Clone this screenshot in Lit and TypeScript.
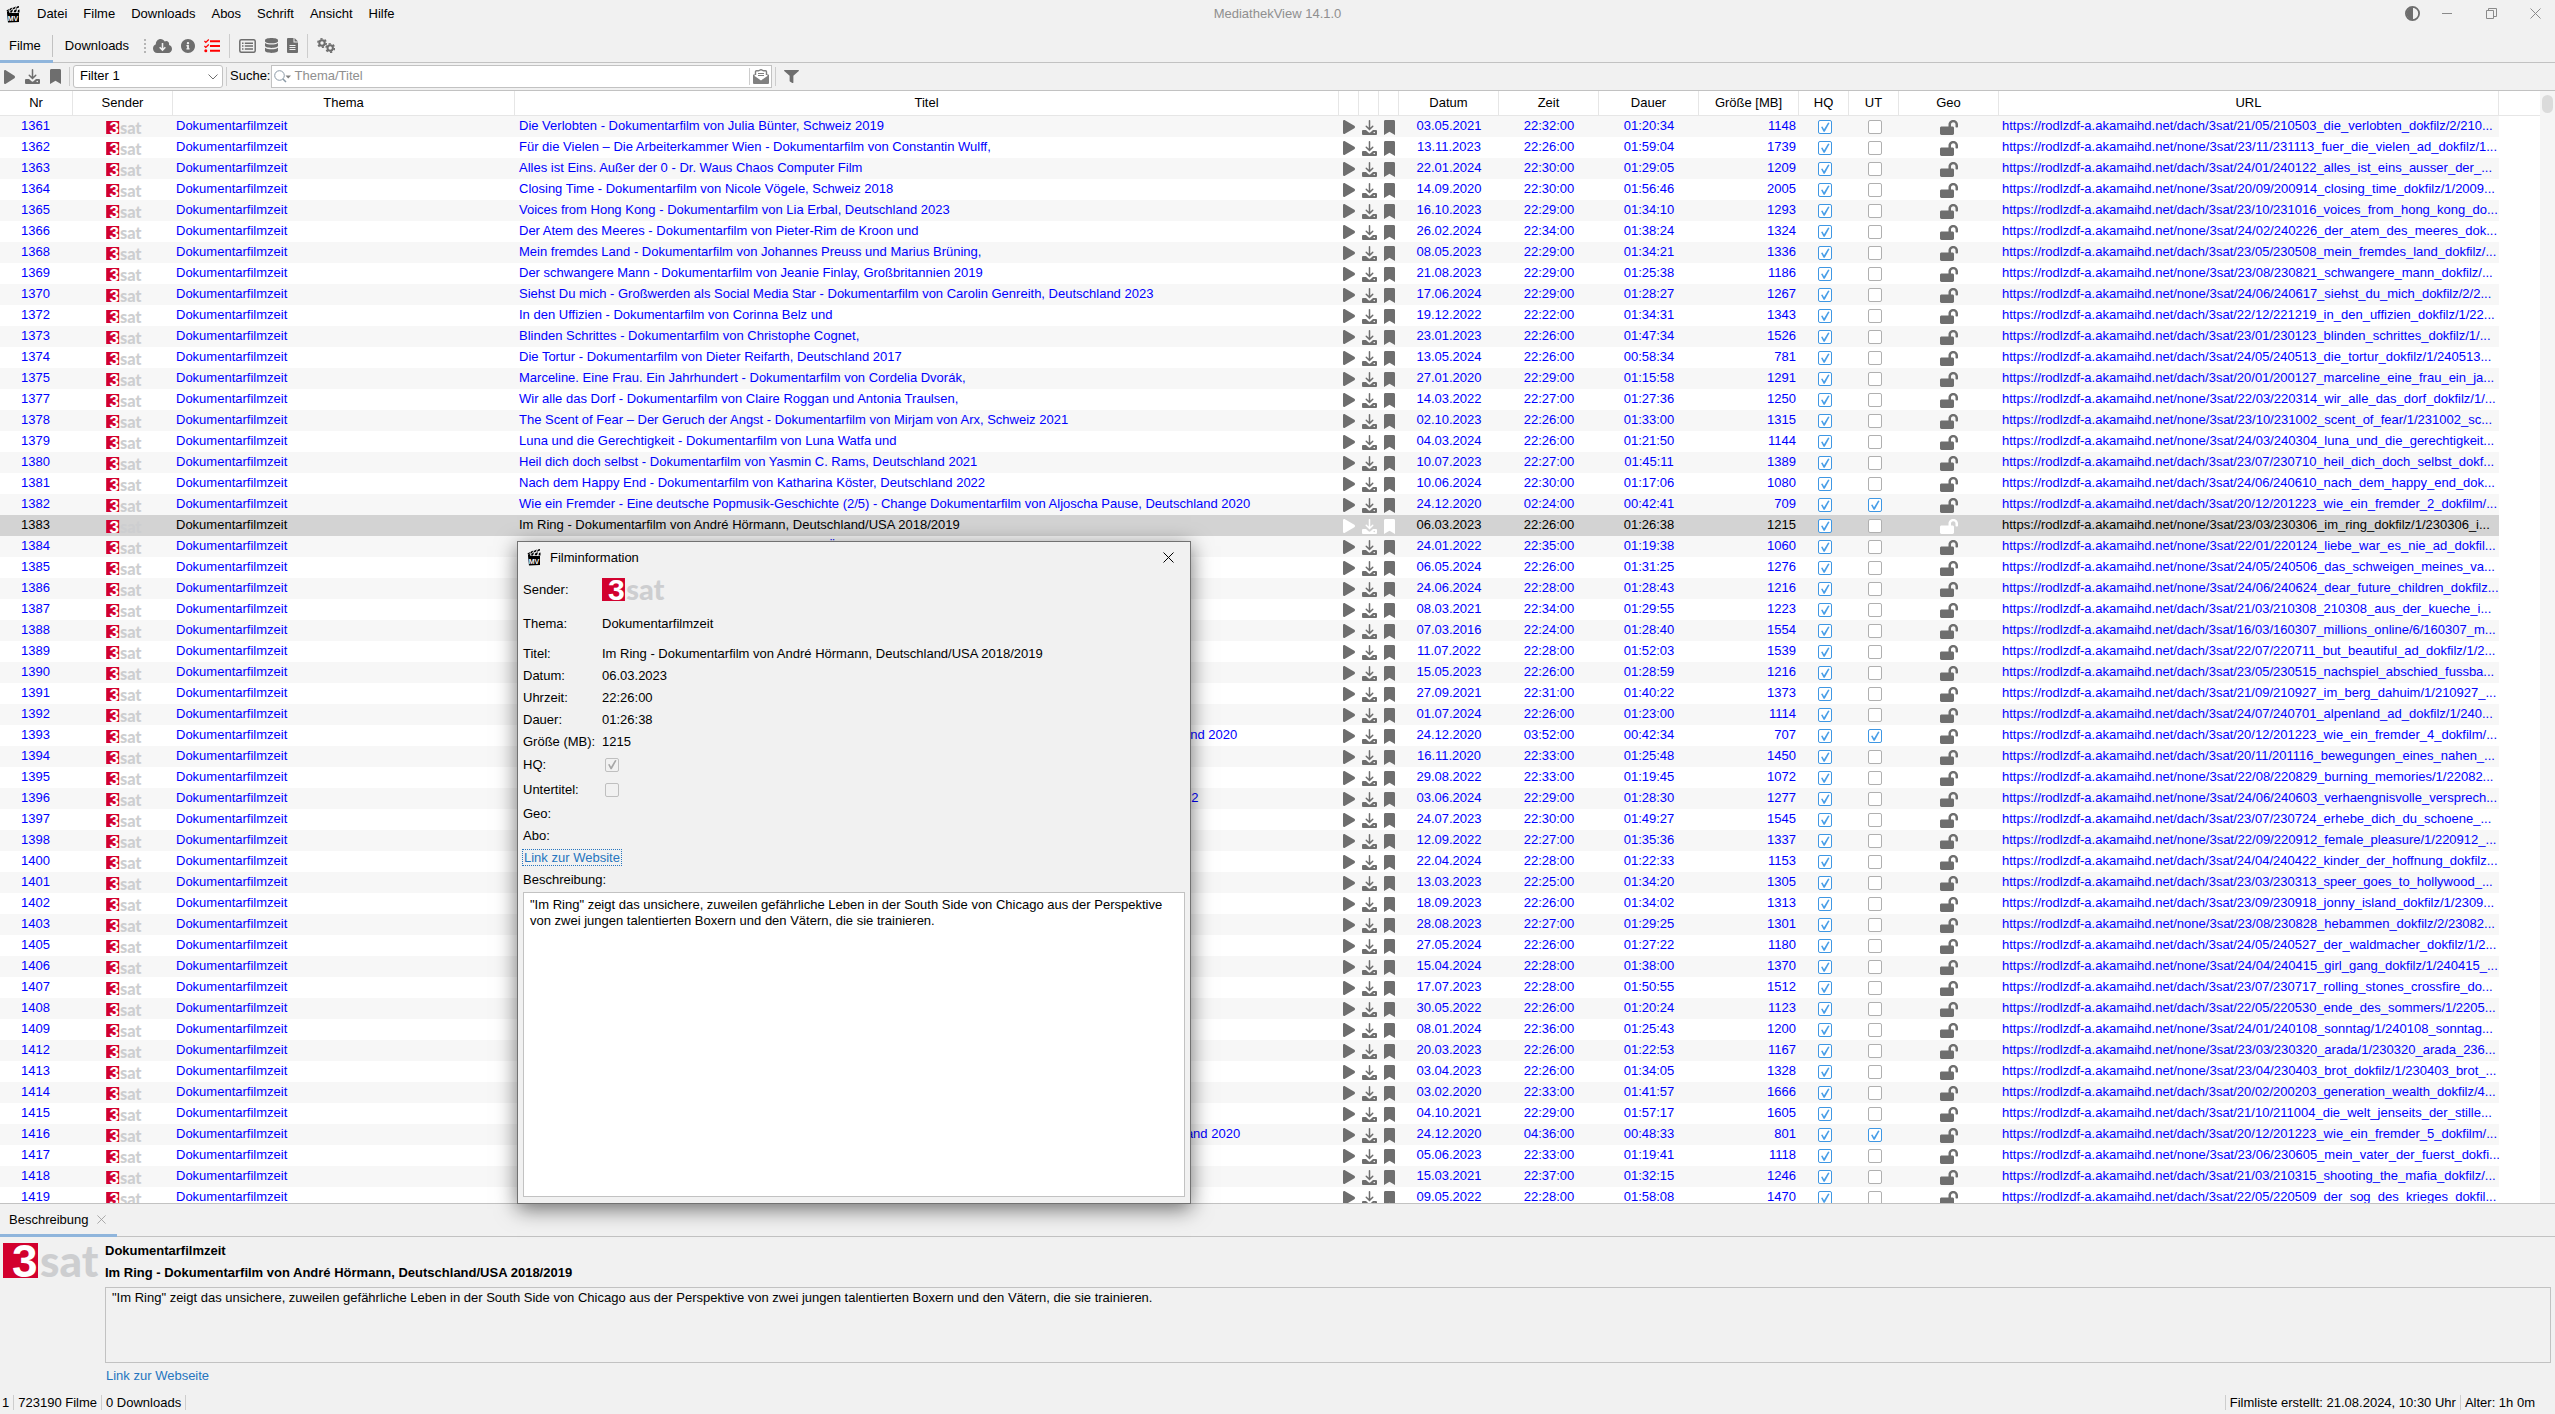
import { LitElement, html, css, nothing } from "lit";
import { customElement, property, state } from "lit/decorators.js";
import { classMap } from "lit/directives/class-map.js";

interface Film {
  nr: string;
  title: string;
  date: string;
  time: string;
  duration: string;
  size: string;
  url: string;
  subtitle: boolean;
}

const BASE = "https://rodlzdf-a.akamaihd.net/";

// nr | title | date | time | duration | size | url path | subtitle flag
const SOURCE = `
1361|Die Verlobten - Dokumentarfilm von Julia Bünter, Schweiz 2019|03.05.2021|22:32:00|01:20:34|1148|dach/3sat/21/05/210503_die_verlobten_dokfilz/2/210...
1362|Für die Vielen – Die Arbeiterkammer Wien - Dokumentarfilm von Constantin Wulff,|13.11.2023|22:26:00|01:59:04|1739|none/3sat/23/11/231113_fuer_die_vielen_ad_dokfilz/1...
1363|Alles ist Eins. Außer der 0 - Dr. Waus Chaos Computer Film|22.01.2024|22:30:00|01:29:05|1209|dach/3sat/24/01/240122_alles_ist_eins_ausser_der_...
1364|Closing Time - Dokumentarfilm von Nicole Vögele, Schweiz 2018|14.09.2020|22:30:00|01:56:46|2005|none/3sat/20/09/200914_closing_time_dokfilz/1/2009...
1365|Voices from Hong Kong - Dokumentarfilm von Lia Erbal, Deutschland 2023|16.10.2023|22:29:00|01:34:10|1293|dach/3sat/23/10/231016_voices_from_hong_kong_do...
1366|Der Atem des Meeres - Dokumentarfilm von Pieter-Rim de Kroon und|26.02.2024|22:34:00|01:38:24|1324|none/3sat/24/02/240226_der_atem_des_meeres_dok...
1368|Mein fremdes Land - Dokumentarfilm von Johannes Preuss und Marius Brüning,|08.05.2023|22:29:00|01:34:21|1336|dach/3sat/23/05/230508_mein_fremdes_land_dokfilz/...
1369|Der schwangere Mann - Dokumentarfilm von Jeanie Finlay, Großbritannien 2019|21.08.2023|22:29:00|01:25:38|1186|none/3sat/23/08/230821_schwangere_mann_dokfilz/...
1370|Siehst Du mich - Großwerden als Social Media Star - Dokumentarfilm von Carolin Genreith, Deutschland 2023|17.06.2024|22:29:00|01:28:27|1267|none/3sat/24/06/240617_siehst_du_mich_dokfilz/2/2...
1372|In den Uffizien - Dokumentarfilm von Corinna Belz und|19.12.2022|22:22:00|01:34:31|1343|dach/3sat/22/12/221219_in_den_uffizien_dokfilz/1/22...
1373|Blinden Schrittes - Dokumentarfilm von Christophe Cognet,|23.01.2023|22:26:00|01:47:34|1526|dach/3sat/23/01/230123_blinden_schrittes_dokfilz/1/...
1374|Die Tortur - Dokumentarfilm von Dieter Reifarth, Deutschland 2017|13.05.2024|22:26:00|00:58:34|781|dach/3sat/24/05/240513_die_tortur_dokfilz/1/240513...
1375|Marceline. Eine Frau. Ein Jahrhundert - Dokumentarfilm von Cordelia Dvorák,|27.01.2020|22:29:00|01:15:58|1291|dach/3sat/20/01/200127_marceline_eine_frau_ein_ja...
1377|Wir alle das Dorf - Dokumentarfilm von Claire Roggan und Antonia Traulsen,|14.03.2022|22:27:00|01:27:36|1250|none/3sat/22/03/220314_wir_alle_das_dorf_dokfilz/1/...
1378|The Scent of Fear – Der Geruch der Angst - Dokumentarfilm von Mirjam von Arx, Schweiz 2021|02.10.2023|22:26:00|01:33:00|1315|none/3sat/23/10/231002_scent_of_fear/1/231002_sc...
1379|Luna und die Gerechtigkeit - Dokumentarfilm von Luna Watfa und|04.03.2024|22:26:00|01:21:50|1144|none/3sat/24/03/240304_luna_und_die_gerechtigkeit...
1380|Heil dich doch selbst - Dokumentarfilm von Yasmin C. Rams, Deutschland 2021|10.07.2023|22:27:00|01:45:11|1389|dach/3sat/23/07/230710_heil_dich_doch_selbst_dokf...
1381|Nach dem Happy End - Dokumentarfilm von Katharina Köster, Deutschland 2022|10.06.2024|22:30:00|01:17:06|1080|dach/3sat/24/06/240610_nach_dem_happy_end_dok...
1382|Wie ein Fremder - Eine deutsche Popmusik-Geschichte (2/5) - Change Dokumentarfilm von Aljoscha Pause, Deutschland 2020|24.12.2020|02:24:00|00:42:41|709|dach/3sat/20/12/201223_wie_ein_fremder_2_dokfilm/...|ut
1383|Im Ring - Dokumentarfilm von André Hörmann, Deutschland/USA 2018/2019|06.03.2023|22:26:00|01:26:38|1215|none/3sat/23/03/230306_im_ring_dokfilz/1/230306_i...
1384|Liebe war es nie - Dokumentarfilm von Maya Sarfaty, Österreich/Israel 2020|24.01.2022|22:35:00|01:19:38|1060|none/3sat/22/01/220124_liebe_war_es_nie_ad_dokfil...
1385||06.05.2024|22:26:00|01:31:25|1276|none/3sat/24/05/240506_das_schweigen_meines_va...
1386||24.06.2024|22:28:00|01:28:43|1216|none/3sat/24/06/240624_dear_future_children_dokfilz...
1387||08.03.2021|22:34:00|01:29:55|1223|dach/3sat/21/03/210308_210308_aus_der_kueche_i...
1388||07.03.2016|22:24:00|01:28:40|1554|dach/3sat/16/03/160307_millions_online/6/160307_m...
1389||11.07.2022|22:28:00|01:52:03|1539|dach/3sat/22/07/220711_but_beautiful_ad_dokfilz/1/2...
1390||15.05.2023|22:26:00|01:28:59|1216|dach/3sat/23/05/230515_nachspiel_abschied_fussba...
1391||27.09.2021|22:31:00|01:40:22|1373|dach/3sat/21/09/210927_im_berg_dahuim/1/210927_...
1392||01.07.2024|22:26:00|01:23:00|1114|dach/3sat/24/07/240701_alpenland_ad_dokfilz/1/240...
1393|Wie ein Fremder - Eine deutsche Popmusik-Geschichte (4/5) - Crisis Dokumentarfilm von Aljoscha Pause, Deutschland 2020|24.12.2020|03:52:00|00:42:34|707|dach/3sat/20/12/201223_wie_ein_fremder_4_dokfilm/...|ut
1394||16.11.2020|22:33:00|01:25:48|1450|dach/3sat/20/11/201116_bewegungen_eines_nahen_...
1395||29.08.2022|22:33:00|01:19:45|1072|none/3sat/22/08/220829_burning_memories/1/22082...
1396|Verhängnisvolle Versprechen - Die Suche nach der Wahrheit - Dokumentarfilm, Deutschland/Österreich/Schweiz 2022|03.06.2024|22:29:00|01:28:30|1277|none/3sat/24/06/240603_verhaengnisvolle_versprech...
1397||24.07.2023|22:30:00|01:49:27|1545|dach/3sat/23/07/230724_erhebe_dich_du_schoene_...
1398||12.09.2022|22:27:00|01:35:36|1337|none/3sat/22/09/220912_female_pleasure/1/220912_...
1400||22.04.2024|22:28:00|01:22:33|1153|dach/3sat/24/04/240422_kinder_der_hoffnung_dokfilz...
1401||13.03.2023|22:25:00|01:34:20|1305|dach/3sat/23/03/230313_speer_goes_to_hollywood_...
1402||18.09.2023|22:26:00|01:34:02|1313|dach/3sat/23/09/230918_jonny_island_dokfilz/1/2309...
1403||28.08.2023|22:27:00|01:29:25|1301|none/3sat/23/08/230828_hebammen_dokfilz/2/23082...
1405||27.05.2024|22:26:00|01:27:22|1180|dach/3sat/24/05/240527_der_waldmacher_dokfilz/1/2...
1406||15.04.2024|22:28:00|01:38:00|1370|none/3sat/24/04/240415_girl_gang_dokfilz/1/240415_...
1407||17.07.2023|22:28:00|01:50:55|1512|dach/3sat/23/07/230717_rolling_stones_crossfire_do...
1408||30.05.2022|22:26:00|01:20:24|1123|dach/3sat/22/05/220530_ende_des_sommers/1/2205...
1409||08.01.2024|22:36:00|01:25:43|1200|none/3sat/24/01/240108_sonntag/1/240108_sonntag...
1412||20.03.2023|22:26:00|01:22:53|1167|none/3sat/23/03/230320_arada/1/230320_arada_236...
1413||03.04.2023|22:26:00|01:34:05|1328|none/3sat/23/04/230403_brot_dokfilz/1/230403_brot_...
1414||03.02.2020|22:33:00|01:41:57|1666|dach/3sat/20/02/200203_generation_wealth_dokfilz/4...
1415||04.10.2021|22:29:00|01:57:17|1605|dach/3sat/21/10/211004_die_welt_jenseits_der_stille...
1416|Wie ein Fremder - Eine deutsche Popmusik-Geschichte (5/5) - Credo Dokumentarfilm von Aljoscha Pause, Deutschland 2020|24.12.2020|04:36:00|00:48:33|801|dach/3sat/20/12/201223_wie_ein_fremder_5_dokfilm/...|ut
1417||05.06.2023|22:33:00|01:19:41|1118|none/3sat/23/06/230605_mein_vater_der_fuerst_dokfi...
1418||15.03.2021|22:37:00|01:32:15|1246|dach/3sat/21/03/210315_shooting_the_mafia_dokfilz/...
1419||09.05.2022|22:28:00|01:58:08|1470|dach/3sat/22/05/220509_der_sog_des_krieges_dokfil...
`;

const FILMS: Film[] = SOURCE.trim()
  .split("\n")
  .map((line) => {
    const [nr, title, date, time, duration, size, path, ut] = line.split("|");
    return { nr, title, date, time, duration, size, url: BASE + path, subtitle: ut === "ut" };
  });

const DESCRIPTION =
  '"Im Ring" zeigt das unsichere, zuweilen gefährliche Leben in der South Side von Chicago aus der Perspektive von zwei jungen talentierten Boxern und den Vätern, die sie trainieren.';

const shared = css`
  * {
    box-sizing: border-box;
  }
  button {
    display: flex;
    align-items: center;
    justify-content: center;
    padding: 0;
    border: 0;
    background: none;
    color: inherit;
    font: inherit;
    flex: none;
  }
  svg {
    display: block;
    flex: none;
    fill: currentColor;
  }
  a {
    color: #2675bf;
    text-decoration: none;
  }
  .check {
    appearance: none;
    display: block;
    width: 14px;
    height: 14px;
    margin: 0;
    border: 1px solid #b0b0b0;
    border-radius: 2px;
    background: #fff;
  }
  .check:checked {
    border-color: #3f97e3;
  }
  .check:checked::before {
    content: "";
    display: block;
    width: 12px;
    height: 12px;
    background: #4a9fe8;
    clip-path: polygon(17% 50%, 29% 46%, 42% 68%, 76% 12%, 88% 16%, 48% 90%, 38% 90%);
  }
  .check:disabled {
    border-color: #bfbfbf;
    background: #f1f1f1;
  }
  .check:disabled::before {
    background: #a6a6a6;
  }
`;

const iconPlay = (w: number, h: number) => html`
  <svg width=${w} height=${h} viewBox="0 0 448 512" preserveAspectRatio="none">
    <path d="M424.4 214.7L72.4 6.6C43.8-10.3 0 6.1 0 47.9V464c0 37.5 40.7 60.1 72.4 41.3l352-208c31.4-18.5 31.5-64.1 0-82.6z" />
  </svg>`;

const iconDownload = html`
  <svg width="15" height="15" viewBox="0 0 30 30">
    <path d="M15 1.5V17M8.500 12.500L15 19l6.500-6.500" fill="none" stroke="currentColor" stroke-width="3" stroke-linecap="round" />
    <path fill-rule="evenodd" d="M2 20h6l4.500 4.200a3.600 3.600 0 0 0 5 0L22 20h6a2 2 0 0 1 2 2v6a2 2 0 0 1-2 2H2a2 2 0 0 1-2-2v-6a2 2 0 0 1 2-2zM24.500 23.500a1.600 1.600 0 1 0 0 3.200a1.600 1.600 0 0 0 0-3.200z" />
  </svg>`;

const iconBookmark = html`
  <svg width="11" height="15" viewBox="0 0 384 512" preserveAspectRatio="none">
    <path d="M0 512V48C0 21.490 21.490 0 48 0h288c26.510 0 48 21.490 48 48v464L192 400 0 512z" />
  </svg>`;

const iconUnlocked = html`
  <svg width="18" height="15" viewBox="0 0 576 512" preserveAspectRatio="none">
    <path d="M423.500 0C339.500.3 272 69.500 272 153.500V224H48c-26.500 0-48 21.500-48 48v192c0 26.500 21.500 48 48 48h352c26.500 0 48-21.500 48-48V272c0-26.500-21.500-48-48-48h-48v-71.100c0-39.600 31.700-72.500 71.300-72.900 40-.4 72.700 32.100 72.700 72v80c0 13.300 10.700 24 24 24h32c13.300 0 24-10.700 24-24v-80C576 68 507.500-.3 423.500 0z" />
  </svg>`;

const iconClose = (size: number) => html`
  <svg width=${size} height=${size} viewBox="0 0 11 11">
    <path d="M.5.5l10 10M10.500.5l-10 10" fill="none" stroke="currentColor" />
  </svg>`;

const iconClapper = html`
  <svg width="14" height="17" viewBox="0 0 28 34" fill="#222">
    <path d="M2 14h24v18l-22 1z" />
    <path d="M2 11l4-1 1 4H2zM9 9l5-1.500-2 5.500H8zM17 8l5-1.500-2 6h-5zM24 8l3-1v6h-4z" />
    <path d="M1 9l5-3-1 4-3 1zM8 5l5-2-3 5-4 1zM15 3l5-2-3 5-5 1zM22 1l4-1v3l-7 3z" />
    <text x="14" y="29" text-anchor="middle" font-family="Liberation Sans, sans-serif" font-weight="700" font-size="14" fill="#fff">MV</text>
  </svg>`;

/** Broadcaster logo; scales with the height that its host gives it. */
@customElement("channel-logo")
export class ChannelLogo extends LitElement {
  @property({ type: Number }) height = 13;

  static styles = css`
    :host {
      display: inline-block;
      line-height: 0;
    }
    svg {
      display: block;
      overflow: visible;
    }
    .digit {
      font: 700 46px "Liberation Sans", Arial, sans-serif;
      fill: #fff;
    }
    .name {
      font: 900 44px Lato, "Liberation Sans", sans-serif;
      fill: #cdced0;
    }
  `;

  render() {
    return html`
      <svg width=${Math.round((this.height * 96) / 35)} height=${this.height} viewBox="0 0 96 35" role="img" aria-label="3sat">
        <rect width="35" height="35" fill="#d2002e" />
        <text class="digit" x="9" y="34">3</text>
        <text class="name" x="37" y="34">sat</text>
      </svg>`;
  }
}

@customElement("film-table")
export class FilmTable extends LitElement {
  @property() selected = "";

  static styles = [
    shared,
    css`
      :host {
        display: flex;
        overflow: hidden;
        background: #fff;
        border-bottom: 1px solid #c2c2c2;
      }
      .view {
        flex: 1;
        min-width: 0;
        overflow: hidden;
      }
      table {
        width: 100%;
        table-layout: fixed;
        border-collapse: separate;
        border-spacing: 0;
      }
      .w20 { width: 20px; }
      .w50 { width: 50px; }
      .w73 { width: 73px; }
      .w100 { width: 100px; }
      .w342 { width: 342px; }
      .w500 { width: 500px; }
      .w41 { width: 41px; }
      th {
        height: 25px;
        padding: 0 0 1px;
        border-right: 1px solid #e6e6e6;
        border-bottom: 1px solid #e6e6e6;
        color: #000;
        font-weight: 400;
        line-height: 22px;
        text-align: center;
      }
      th.filler {
        border-right: 0;
      }
      td {
        height: 21px;
        padding: 0 3px 2px;
        line-height: 19px;
        white-space: nowrap;
        overflow: hidden;
        color: #00f;
      }
      tbody tr:nth-child(odd) td:not(.filler) {
        background: #f7f7f7;
      }
      tbody tr.selected td:not(.filler) {
        background: #d3d3d3;
        color: #000;
      }
      .center {
        text-align: center;
      }
      td.nr {
        padding-right: 5px;
        text-align: center;
      }
      td.title {
        padding-left: 4px;
      }
      .right {
        text-align: right;
      }
      td.icon {
        padding: 1px 0 0;
        color: #6e6e6e;
      }
      td.icon.box {
        padding-left: 2px;
      }
      tbody tr.selected td.icon {
        color: #fff;
      }
      .mid {
        display: flex;
        align-items: center;
        justify-content: center;
        margin: auto;
        height: 20px;
      }
      .track {
        width: 15px;
        flex: none;
        padding: 4px 2px;
        background: #f5f5f5;
      }
      .thumb {
        height: 18px;
        border-radius: 6px;
        background: #dbdbdb;
      }
    `,
  ];

  private row(f: Film) {
    return html`
      <tr class=${classMap({ selected: f.nr === this.selected })}>
        <td class="nr">${f.nr}</td>
        <td class="icon box"><span class="mid"><channel-logo height="13"></channel-logo></span></td>
        <td>Dokumentarfilmzeit</td>
        <td class="title">${f.title}</td>
        <td class="icon"><button class="mid" aria-label="Film abspielen">${iconPlay(12, 14)}</button></td>
        <td class="icon"><button class="mid" aria-label="Film speichern">${iconDownload}</button></td>
        <td class="icon"><button class="mid" aria-label="Film merken">${iconBookmark}</button></td>
        <td class="center">${f.date}</td>
        <td class="center">${f.time}</td>
        <td class="center">${f.duration}</td>
        <td class="right">${f.size}</td>
        <td class="icon box"><span class="mid"><input class="check" type="checkbox" aria-label="HQ" checked /></span></td>
        <td class="icon box"><span class="mid"><input class="check" type="checkbox" aria-label="UT" ?checked=${f.subtitle} /></span></td>
        <td class="icon"><span class="mid">${iconUnlocked}</span></td>
        <td>${f.url}</td>
        <td class="filler"></td>
      </tr>`;
  }

  render() {
    return html`
      <div class="view">
        <table>
          <thead>
            <tr>
              <th class="w73">Nr</th>
              <th class="w100">Sender</th>
              <th class="w342">Thema</th>
              <th>Titel</th>
              <th class="w20"></th>
              <th class="w20"></th>
              <th class="w20"></th>
              <th class="w100">Datum</th>
              <th class="w100">Zeit</th>
              <th class="w100">Dauer</th>
              <th class="w100">Größe [MB]</th>
              <th class="w50">HQ</th>
              <th class="w50">UT</th>
              <th class="w100">Geo</th>
              <th class="w500">URL</th>
              <th class="w41 filler"></th>
            </tr>
          </thead>
          <tbody>${FILMS.map((f) => this.row(f))}</tbody>
        </table>
      </div>
      <div class="track"><div class="thumb"></div></div>`;
  }
}

@customElement("film-dialog")
export class FilmDialog extends LitElement {
  @property({ attribute: false }) film!: Film;

  static styles = [
    shared,
    css`
      :host {
        display: flex;
        flex-direction: column;
        background: #f1f1f1;
        border: 1px solid #727272;
        box-shadow: 0 5px 20px rgba(0, 0, 0, 0.55);
        padding: 0 5px 6px;
      }
      header {
        display: flex;
        align-items: center;
        height: 30px;
        padding: 0 11px 0 4px;
        margin-bottom: 2px;
      }
      h2 {
        flex: 1;
        margin: 0 0 0 9px;
        font-size: 13px;
        font-weight: 400;
      }
      .facts {
        display: grid;
        grid-template-columns: 79px 1fr;
        grid-template-rows: 30px 38px repeat(5, 22px) repeat(2, 25px) repeat(4, 22px);
        align-items: center;
      }
      .facts .check {
        margin-left: 3px;
      }
      .wide {
        grid-column: 1 / 3;
      }
      .focus {
        padding: 0 1px;
        outline: 1px dotted #2675bf;
      }
      textarea {
        flex: 1;
        width: 100%;
        margin: 2px 0 0;
        padding: 4px 6px;
        resize: none;
        border: 1px solid #c2c2c2;
        outline: 0;
        background: #fff;
        color: #000;
        font: inherit;
        line-height: 16px;
      }
    `,
  ];

  render() {
    const f = this.film;
    return html`
      <header>
        ${iconClapper}
        <h2>Filminformation</h2>
        <button aria-label="Schließen">${iconClose(11)}</button>
      </header>
      <div class="facts">
        <span>Sender:</span><channel-logo height="23"></channel-logo>
        <span>Thema:</span><span>Dokumentarfilmzeit</span>
        <span>Titel:</span><span>${f.title}</span>
        <span>Datum:</span><span>${f.date}</span>
        <span>Uhrzeit:</span><span>${f.time}</span>
        <span>Dauer:</span><span>${f.duration}</span>
        <span>Größe (MB):</span><span>${f.size}</span>
        <label for="hq">HQ:</label><input id="hq" class="check" type="checkbox" checked disabled />
        <label for="ut">Untertitel:</label><input id="ut" class="check" type="checkbox" disabled />
        <span class="wide">Geo:</span>
        <span class="wide">Abo:</span>
        <span class="wide"><a class="focus" href="#website">Link zur Website</a></span>
        <label class="wide" for="text">Beschreibung:</label>
      </div>
      <textarea id="text" readonly .value=${DESCRIPTION}></textarea>`;
  }
}

@customElement("app-root")
export class AppRoot extends LitElement {
  @state() private selected = "1383";

  static styles = [
    shared,
    css`
      :host {
        position: relative;
        display: flex;
        flex-direction: column;
        height: 100vh;
        overflow: hidden;
        background: #f1f1f1;
        color: #000;
        font: 13px/15px "Liberation Sans", Arial, sans-serif;
      }
      .menu {
        display: grid;
        grid-template-columns: 1fr auto 1fr;
        align-items: center;
        height: 28px;
        flex: none;
        padding-bottom: 2px;
      }
      .menu nav {
        display: flex;
        align-items: center;
        gap: 16px;
        padding-left: 6px;
      }
      .menu nav svg {
        margin: 2px 1px 0 0;
      }
      .caption {
        color: #8f8f8f;
      }
      .window {
        display: flex;
        align-items: center;
        justify-content: flex-end;
        padding: 1px 14px 0 0;
        gap: 33px;
        color: #8a8a8a;
      }
      .theme {
        color: #6e6e6e;
        margin-right: -11px;
      }
      .tabs {
        display: flex;
        align-items: center;
        height: 35px;
        flex: none;
        box-shadow: inset 0 -1px #c2c2c2;
      }
      .tab {
        height: 35px;
        padding: 3px 12px 0;
        border-bottom: 3px solid transparent;
      }
      .tab.first {
        padding: 3px 12px 0 9px;
        background: linear-gradient(#c2c2c2, #c2c2c2) right 7px / 1px 22px no-repeat;
      }
      .tab.on {
        border-bottom-color: #8fb5dc;
      }
      .tools {
        display: flex;
        align-items: center;
        gap: 9px;
        color: #6e6e6e;
      }
      .grip {
        width: 2px;
        height: 14px;
        margin: 0 7px 0 3px;
        background: repeating-linear-gradient(#b5b5b5 0 2px, transparent 2px 4px);
      }
      .sep {
        width: 1px;
        height: 24px;
        flex: none;
        background: #cdcdcd;
      }
      .sep.low {
        height: 19px;
      }
      .red {
        color: #f00;
      }
      .filterbar {
        display: flex;
        align-items: center;
        height: 28px;
        flex: none;
        border-bottom: 1px solid #c2c2c2;
      }
      .filterbar .tools {
        gap: 10px;
        padding: 0 8px 0 4px;
      }
      .pick {
        position: relative;
        display: flex;
        margin: 0 3px;
        color: #6e6e6e;
      }
      .pick svg {
        position: absolute;
        right: 5px;
        top: 9px;
        pointer-events: none;
      }
      select {
        appearance: none;
        width: 150px;
        height: 23px;
        padding: 0 6px 2px;
        border: 1px solid #c2c2c2;
        border-radius: 3px;
        background: #fff;
        color: #000;
        font: inherit;
      }
      .caption-search {
        padding: 0 1px 2px 3px;
      }
      .search {
        display: flex;
        align-items: center;
        width: 501px;
        height: 23px;
        margin-right: 3px;
        padding: 0 2px;
        border: 1px solid #c2c2c2;
        background: #fff;
        color: #808080;
      }
      .search input {
        flex: 1;
        min-width: 0;
        padding: 0 3px 2px;
        border: 0;
        outline: 0;
        background: none;
        font: inherit;
      }
      .search input::placeholder {
        color: #8f8f8f;
      }
      .search .sep {
        height: 17px;
        margin-right: 3px;
      }
      .funnel {
        margin-left: 8px;
        color: #6e6e6e;
      }
      film-table {
        flex: 1;
        min-height: 0;
      }
      .dock {
        display: flex;
        align-items: center;
        height: 33px;
        flex: none;
        box-shadow: inset 0 -1px #c2c2c2;
      }
      .dock .tab {
        height: 33px;
        padding: 0 11px 0 9px;
        gap: 8px;
      }
      .dock svg {
        color: #999;
      }
      .details {
        display: flex;
        gap: 6px;
        flex: none;
        padding: 6px 4px 0 3px;
      }
      .text {
        display: flex;
        flex-direction: column;
        flex: 1;
      }
      .text strong {
        line-height: 22px;
      }
      .text strong:first-child {
        margin-top: -3px;
      }
      .text textarea {
        height: 76px;
        margin: 3px 0 5px;
        padding: 2px 6px;
        resize: none;
        border: 1px solid #c2c2c2;
        outline: 0;
        background: #f1f1f1;
        font: inherit;
        line-height: 16px;
      }
      .text a {
        margin-left: 1px;
      }
      .status {
        display: flex;
        align-items: center;
        gap: 4px;
        height: 24px;
        flex: none;
        margin-top: 7px;
        padding: 0 20px 0 2px;
      }
      .status .sep {
        height: 15px;
      }
      .push {
        margin-left: auto;
      }
      .popup {
        position: absolute;
        left: 517px;
        top: 541px;
        width: 674px;
        height: 663px;
      }
    `,
  ];

  private renderMenu() {
    return html`
      <header class="menu">
        <nav>
          ${iconClapper}
          ${["Datei", "Filme", "Downloads", "Abos", "Schrift", "Ansicht", "Hilfe"].map((m) => html`<button>${m}</button>`)}
        </nav>
        <span class="caption">MediathekView 14.1.0</span>
        <div class="window">
          <button class="theme" aria-label="Erscheinungsbild">
            <svg width="15" height="15" viewBox="0 0 15 15">
              <circle cx="7.500" cy="7.500" r="6.600" fill="none" stroke="currentColor" stroke-width="1.800" />
              <path d="M8 1v13a6.500 6.500 0 0 1 0-13z" />
            </svg>
          </button>
          <button aria-label="Minimieren">
            <svg width="11" height="11" viewBox="0 0 11 11"><path d="M0 5h10v1H0z" /></svg>
          </button>
          <button aria-label="Wiederherstellen">
            <svg width="11" height="11" viewBox="0 0 11 11">
              <path d="M.5 2.500h7v8h-7zM2.500 2.500v-2h8v8h-3" fill="none" stroke="currentColor" />
            </svg>
          </button>
          <button aria-label="Schließen">${iconClose(11)}</button>
        </div>
      </header>`;
  }

  private renderTabs() {
    return html`
      <div class="tabs">
        <button class="tab first on">Filme</button>
        <button class="tab">Downloads</button>
        <span class="grip"></span>
        <div class="tools">
          <button aria-label="Neue Filmliste laden">
            <svg width="19" height="14" viewBox="0 32 640 448" preserveAspectRatio="none">
              <path d="M537.600 226.600c4.100-10.700 6.400-22.400 6.400-34.600 0-53-43-96-96-96-19.700 0-38.100 6-53.300 16.200C367 64.200 315.300 32 256 32c-88.400 0-160 71.600-160 160 0 2.700.1 5.400.2 8.100C40.200 219.800 0 273.200 0 336c0 79.500 64.500 144 144 144h368c70.700 0 128-57.300 128-128 0-61.900-44-113.600-102.400-125.400z" />
              <path d="M320 160v220M225 295l95 95 95-95" fill="none" stroke="#f1f1f1" stroke-width="52" />
            </svg>
          </button>
          <button aria-label="Filminformation anzeigen">
            <svg width="14" height="14" viewBox="8 8 496 496">
              <path d="M256 8C119.043 8 8 119.083 8 256c0 136.997 111.043 248 248 248s248-111.003 248-248C504 119.083 392.957 8 256 8zm0 110c23.196 0 42 18.804 42 42s-18.804 42-42 42-42-18.804-42-42 18.804-42 42-42zm56 254c0 6.627-5.373 12-12 12h-88c-6.627 0-12-5.373-12-12v-24c0-6.627 5.373-12 12-12h12v-64h-12c-6.627 0-12-5.373-12-12v-24c0-6.627 5.373-12 12-12h64c6.627 0 12 5.373 12 12v100h12c6.627 0 12 5.373 12 12v24z" />
            </svg>
          </button>
          <button class="red" aria-label="Filter">
            <svg width="16" height="14" viewBox="0 0 16 14">
              <path d="M6 1.200h10v2H6zM6 6h10v2H6zM6 10.800h10v2H6z" />
              <circle cx="1.800" cy="11.800" r="1.500" />
              <path d="M.4 2l1.400 1.400L4.800.6M.4 7l1.400 1.400 3-2.800" fill="none" stroke="currentColor" stroke-width="1.300" />
            </svg>
          </button>
          <span class="sep"></span>
          <button aria-label="Liste">
            <svg width="17" height="14" viewBox="0 0 17 14">
              <rect x=".8" y=".8" width="15.400" height="12.400" rx="1.500" fill="none" stroke="currentColor" stroke-width="1.500" />
              <path d="M3 3.500h1.500V5H3zM3 6.300h1.500v1.500H3zM3 9.200h1.500v1.500H3zM5.800 3.500H14V5H5.800zM5.800 6.300H14v1.500H5.800zM5.800 9.200H14v1.500H5.800z" />
            </svg>
          </button>
          <button aria-label="Datenbank">
            <svg width="13" height="15" viewBox="0 0 13 15">
              <path d="M0 2.200C0 1 3 .1 6.500.1S13 1 13 2.200v1C13 4.400 10 5.300 6.500 5.300S0 4.400 0 3.200z" />
              <path d="M0 5c1.500 1.100 4 1.500 6.500 1.500S11.500 6.100 13 5v2.800c0 1.200-3 2.100-6.500 2.100S0 9 0 7.800z" />
              <path d="M0 9.700c1.500 1.100 4 1.500 6.500 1.500s5-.4 6.500-1.500v3.100c0 1.200-3 2.100-6.500 2.100S0 14 0 12.800z" />
            </svg>
          </button>
          <button aria-label="Protokoll">
            <svg width="11" height="15" viewBox="0 0 11 15">
              <path fill-rule="evenodd" d="M1 0h5.500v4.500H11V14a1 1 0 0 1-1 1H1a1 1 0 0 1-1-1V1a1 1 0 0 1 1-1zM2.500 7v1h6V7zM2.500 9v1h6V9zM2.500 11v1h6v-1z" />
              <path d="M7.500 0L11 3.500H7.500z" />
            </svg>
          </button>
          <span class="sep"></span>
          <button aria-label="Einstellungen">
            <svg width="18" height="15" viewBox="0 0 18 15">
              <g fill="none" stroke="currentColor">
                <circle cx="5" cy="5" r="2.700" stroke-width="2" />
                <circle cx="5" cy="5" r="4.200" stroke-width="1.600" stroke-dasharray="2.200 2.200" />
                <circle cx="13.200" cy="10" r="2.700" stroke-width="2" />
                <circle cx="13.200" cy="10" r="4.200" stroke-width="1.600" stroke-dasharray="2.200 2.200" />
              </g>
            </svg>
          </button>
        </div>
      </div>`;
  }

  private renderFilterBar() {
    return html`
      <div class="filterbar">
        <div class="tools">
          <button aria-label="Film abspielen">${iconPlay(11, 14)}</button>
          <button aria-label="Film aufzeichnen">${iconDownload}</button>
          <button aria-label="Film merken">${iconBookmark}</button>
        </div>
        <span class="sep low"></span>
        <div class="pick">
          <select aria-label="Filter">
            <option>Filter 1</option>
          </select>
          <svg width="10" height="6" viewBox="0 0 10 6">
            <path d="M.5.5L5 5l4.500-4.500" fill="none" stroke="currentColor" />
          </svg>
        </div>
        <span class="sep low"></span>
        <label class="caption-search" for="search">Suche:</label>
        <div class="search">
          <button aria-label="Suchverlauf">
            <svg width="17" height="14" viewBox="0 0 17 14">
              <circle cx="5.500" cy="5.500" r="4.800" fill="none" stroke="#8a99a6" />
              <path d="M9 9l3 3" stroke="#8a99a6" stroke-width="1.500" />
              <path d="M11.500 5.500H17l-2.800 3z" />
            </svg>
          </button>
          <input id="search" type="text" placeholder="Thema/Titel" />
          <span class="sep"></span>
          <button aria-label="In der Beschreibung suchen">
            <svg width="16" height="15" viewBox="0 0 16 15">
              <path d="M2.500 6V2.800C2.500 2.300 3 1.800 3.500 1.800h2L8 .6l2.500 1.200h2c.5 0 1 .5 1 1V6" fill="none" stroke="currentColor" stroke-width="1.400" />
              <path d="M5 4h6v1H5zM5 6h6v1H5z" />
              <path d="M0 6l1.600-1.300v2.200L8 11.500l6.400-4.600V4.700L16 6v8a1 1 0 0 1-1 1H1a1 1 0 0 1-1-1z" />
            </svg>
          </button>
        </div>
        <span class="sep low"></span>
        <button class="funnel" aria-label="Filterdialog">
          <svg width="15" height="13" viewBox="0 0 512 512" preserveAspectRatio="none">
            <path d="M487.976 0H24.028C2.710 0-8.047 25.866 7.058 40.971L192 225.941V432c0 7.831 3.821 15.170 10.237 19.662l80 55.980C298.020 518.690 320 507.493 320 487.980V225.941l184.947-184.970C520.021 25.896 509.338 0 487.976 0z" />
          </svg>
        </button>
      </div>`;
  }

  render() {
    const film = FILMS.find((f) => f.nr === this.selected);
    return html`
      ${this.renderMenu()} ${this.renderTabs()} ${this.renderFilterBar()}
      <film-table .selected=${this.selected}></film-table>
      <div class="dock">
        <button class="tab on">Beschreibung ${iconClose(9)}</button>
      </div>
      <section class="details">
        <channel-logo height="35"></channel-logo>
        <div class="text">
          <strong>Dokumentarfilmzeit</strong>
          <strong>${film?.title}</strong>
          <textarea readonly aria-label="Beschreibung" .value=${DESCRIPTION}></textarea>
          <a href="#webseite">Link zur Webseite</a>
        </div>
      </section>
      <footer class="status">
        <span>1</span>
        <span class="sep"></span>
        <span>723190 Filme</span>
        <span class="sep"></span>
        <span>0 Downloads</span>
        <span class="sep"></span>
        <span class="sep push"></span>
        <span>Filmliste erstellt: 21.08.2024, 10:30 Uhr</span>
        <span class="sep"></span>
        <span>Alter: 1h 0m</span>
      </footer>
      ${film
        ? html`<film-dialog class="popup" role="dialog" aria-label="Filminformation" .film=${film}></film-dialog>`
        : nothing}`;
  }
}
